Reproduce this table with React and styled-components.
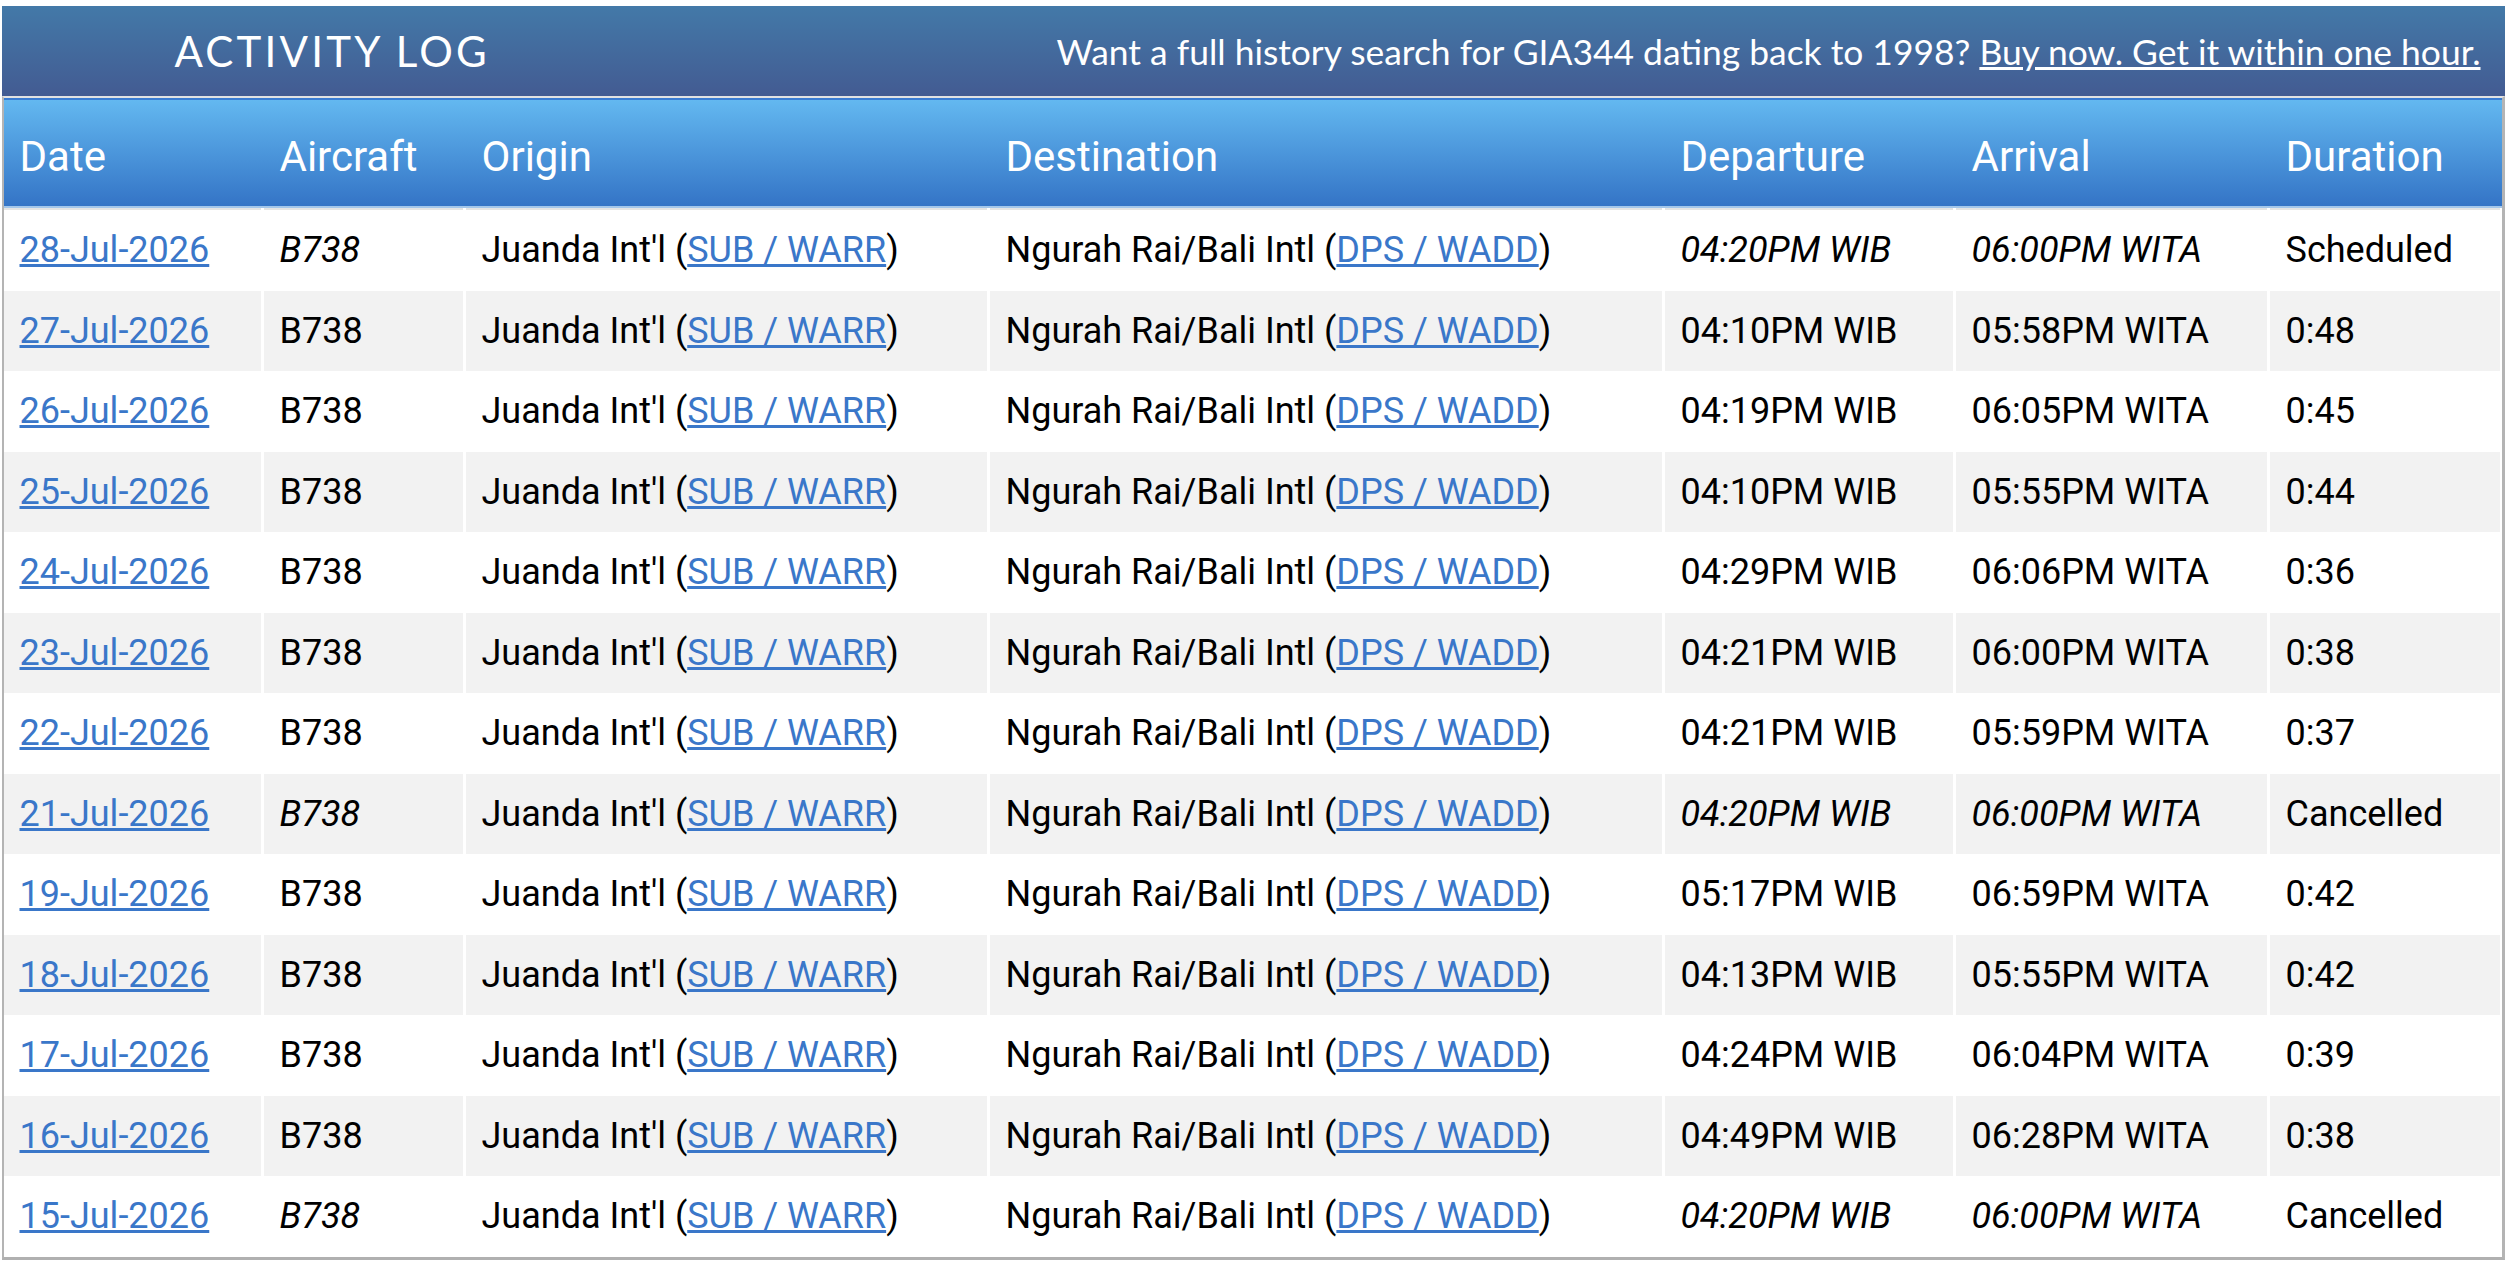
import styled, { createGlobalStyle } from 'styled-components';

const GlobalStyle = createGlobalStyle`
    body {
        margin: 0;
        background: #ffffff;
        font-family: Roboto, "Liberation Sans", sans-serif;
    }
`;

const flights = [
    { date: '28-Jul-2026', dep: '04:20PM WIB', arr: '06:00PM WITA', dur: 'Scheduled', planned: true },
    { date: '27-Jul-2026', dep: '04:10PM WIB', arr: '05:58PM WITA', dur: '0:48' },
    { date: '26-Jul-2026', dep: '04:19PM WIB', arr: '06:05PM WITA', dur: '0:45' },
    { date: '25-Jul-2026', dep: '04:10PM WIB', arr: '05:55PM WITA', dur: '0:44' },
    { date: '24-Jul-2026', dep: '04:29PM WIB', arr: '06:06PM WITA', dur: '0:36' },
    { date: '23-Jul-2026', dep: '04:21PM WIB', arr: '06:00PM WITA', dur: '0:38' },
    { date: '22-Jul-2026', dep: '04:21PM WIB', arr: '05:59PM WITA', dur: '0:37' },
    { date: '21-Jul-2026', dep: '04:20PM WIB', arr: '06:00PM WITA', dur: 'Cancelled', planned: true },
    { date: '19-Jul-2026', dep: '05:17PM WIB', arr: '06:59PM WITA', dur: '0:42' },
    { date: '18-Jul-2026', dep: '04:13PM WIB', arr: '05:55PM WITA', dur: '0:42' },
    { date: '17-Jul-2026', dep: '04:24PM WIB', arr: '06:04PM WITA', dur: '0:39' },
    { date: '16-Jul-2026', dep: '04:49PM WIB', arr: '06:28PM WITA', dur: '0:38' },
    { date: '15-Jul-2026', dep: '04:20PM WIB', arr: '06:00PM WITA', dur: 'Cancelled', planned: true },
];

const columns = ['Date', 'Aircraft', 'Origin', 'Destination', 'Departure', 'Arrival', 'Duration'];

export default function App() {
    return (
        <Page>
            <GlobalStyle />
            <Banner>
                <Title>ACTIVITY LOG</Title>
                <Promo>
                    Want a full history search for GIA344 dating back to 1998?{' '}
                    <PromoLink href="#">Buy now. Get it within one hour.</PromoLink>
                </Promo>
            </Banner>

            <Table>
                <HeadRow>
                    {columns.map((c) => (
                        <HeadCell key={c}>{c}</HeadCell>
                    ))}
                </HeadRow>

                {flights.map((f, i) => (
                    <Row key={f.date}>
                        <Cell $alt={i % 2 === 1} $first={i === 0}>
                            <Link href="#">{f.date}</Link>
                        </Cell>
                        <Cell $alt={i % 2 === 1} $first={i === 0} $italic={f.planned}>B738</Cell>
                        <Cell $alt={i % 2 === 1} $first={i === 0}>
                            Juanda Int'l (<Link href="#">SUB / WARR</Link>)
                        </Cell>
                        <Cell $alt={i % 2 === 1} $first={i === 0}>
                            Ngurah Rai/Bali Intl (<Link href="#">DPS / WADD</Link>)
                        </Cell>
                        <Cell $alt={i % 2 === 1} $first={i === 0} $italic={f.planned}>{f.dep}</Cell>
                        <Cell $alt={i % 2 === 1} $first={i === 0} $italic={f.planned}>{f.arr}</Cell>
                        <Cell $alt={i % 2 === 1} $first={i === 0}>{f.dur}</Cell>
                    </Row>
                ))}
            </Table>
        </Page>
    );
}

const COLS = '257px 199px 521px 672px 288px 311px 230px';

const Page = styled.div`
    width: 2503px;
    padding: 6px 0 0 1.5px;
`;

const Banner = styled.div`
    display: flex;
    align-items: center;
    justify-content: space-between;
    height: 90px;
    padding: 0 24px 0 173px;
    background: linear-gradient(#4379a8, #435b92);
    color: #ffffff;
    font-family: Lato, "Open Sans", sans-serif;
`;

const Title = styled.h1`
    margin: 0;
    font-size: 42px;
    font-weight: 400;
    letter-spacing: 3.2px;
`;

const Promo = styled.div`
    font-size: 35.4px;
`;

const PromoLink = styled.a`
    color: #ffffff;
    text-decoration: underline;
`;

const Table = styled.div`
    border-top: 2.7px solid #e2e2e2;
    border-left: 2px solid #b4b4b4;
    border-right: 3px solid #b4b4b4;
    border-bottom: 3px solid #b0b0b0;
    background: #ffffff;
    box-shadow: 0 15px 0 -3px #dcdcdc;
`;

const HeadRow = styled.div`
    box-sizing: border-box;
    display: grid;
    grid-template-columns: ${COLS};
    column-gap: 3px;
    height: 110px;
    padding-top: 6px;
    align-items: center;
    border-top: 2px solid #3b7cd2;
    border-bottom: 2px solid #a3c6ea;
    background: linear-gradient(#63b8f0, #3474c6);
`;

const HeadCell = styled.div`
    padding-left: 16px;
    color: #ffffff;
    font-size: 42px;
`;

const Row = styled.div`
    display: grid;
    grid-template-columns: ${COLS};
    column-gap: 3px;
`;

const Cell = styled.div`
    display: flex;
    align-items: center;
    height: 80.5px;
    padding-left: 16px;
    font-size: 36px;
    color: #000000;
    white-space: nowrap;
    font-style: ${(p) => (p.$italic ? 'italic' : 'normal')};
    background: ${(p) => (p.$alt ? '#f2f2f2' : '#ffffff')};
    border-top: ${(p) => (p.$first ? '2px solid #e4e4e4' : 'none')};
`;

const Link = styled.a`
    color: #3a77c9;
    text-decoration: underline;
    font-style: normal;
    white-space: pre;
`;
